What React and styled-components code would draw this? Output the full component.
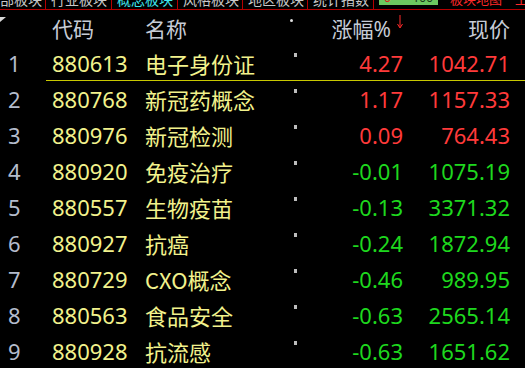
import styled, { createGlobalStyle } from "styled-components";

const GlobalStyle = createGlobalStyle`
  html, body {
    margin: 0;
    padding: 0;
    background: #000;
    overflow: hidden;
  }
  body {
    font-family: "Noto Sans", "Noto Sans CJK SC", sans-serif;
  }
`;

const Screen = styled.div`
  width: 525px;
  height: 368px;
  background: #000;
  overflow: hidden;
`;

const TabBar = styled.div`
  display: flex;
  height: 9px;
  border-bottom: 1px solid #b40000;
  overflow: hidden;
`;

const Tab = styled.div`
  width: ${(p) => p.$w}px;
  flex: none;
  height: 9px;
  overflow: hidden;
  border-right: ${(p) => (p.$sep ? "1px solid #b40000" : "none")};
  box-sizing: border-box;
  padding-left: ${(p) => p.$pl ?? 5}px;
  color: ${(p) => p.$color || "#c8c8c8"};
  font-size: ${(p) => p.$fs || 14}px;
  line-height: 14px;
  white-space: nowrap;
  font-family: "Noto Sans CJK SC", sans-serif;
`;

const TabText = styled.span`
  display: block;
  margin-top: -8px;
`;

const Meter = styled.div`
  width: 59px;
  flex: none;
  margin-left: 5px;
  height: 5px;
  background: #6cc860;
  display: flex;
  justify-content: space-between;
  padding: 0 5px;
  box-sizing: border-box;
  font-size: 12px;
  line-height: 12px;
  overflow: hidden;
`;

const MeterNum = styled.span`
  margin-top: -8px;
  color: ${(p) => p.$color};
`;

const Grid = styled.div`
  display: grid;
  grid-template-columns: 52px 93px 148px 6px 104px 107px 1fr;
`;

const HeaderRow = styled(Grid)`
  height: 36px;
  align-items: center;
  color: #c6ccd6;
  font-size: 21px;
  position: relative;
`;

const Corner = styled.svg`
  position: absolute;
  left: 0;
  top: 7px;
`;

const HeadCell = styled.div`
  display: flex;
  align-items: center;
  justify-content: ${(p) => (p.$right ? "flex-end" : "flex-start")};
`;

const HeadDot = styled.div`
  width: 3px;
  height: 3px;
  border-radius: 50%;
  background: #e0e0e0;
  align-self: start;
  margin-top: 9px;
  margin-left: -3px;
`;

const SortArrow = styled.svg`
  margin-left: 6px;
  margin-bottom: 12px;
`;

const Row = styled(Grid)`
  height: 36px;
  align-items: center;
  font-size: 22px;
  position: relative;
  margin-top: ${(p) => (p.$first ? "-1px" : "0")};

  &::after {
    content: "";
    display: ${(p) => (p.$selected ? "block" : "none")};
    position: absolute;
    left: 46px;
    right: 0;
    bottom: 0;
    height: 1px;
    background: #c8c800;
  }
`;

const Index = styled.div`
  padding-left: 8px;
  color: #b4bccc;
`;

const Code = styled.div`
  color: #f2f28c;
`;

const Name = styled.div`
  color: #f2f28c;
  font-family: "Noto Sans CJK SC", sans-serif;
`;

const Mark = styled.div`
  width: 3px;
  height: 4px;
  background: #bdbdbd;
  align-self: start;
  margin-top: 8px;
  margin-left: 1px;
`;

const Num = styled.div`
  text-align: right;
  color: ${(p) => (p.$up ? "#ff3a3a" : "#1ed81e")};
`;

const rows = [
  ["880613", "电子身份证", "4.27", "1042.71"],
  ["880768", "新冠药概念", "1.17", "1157.33"],
  ["880976", "新冠检测", "0.09", "764.43"],
  ["880920", "免疫治疗", "-0.01", "1075.19"],
  ["880557", "生物疫苗", "-0.13", "3371.32"],
  ["880927", "抗癌", "-0.24", "1872.94"],
  ["880729", "CXO概念", "-0.46", "989.95"],
  ["880563", "食品安全", "-0.63", "2565.14"],
  ["880928", "抗流感", "-0.63", "1651.62"],
];

export default function App() {
  return (
    <Screen>
      <GlobalStyle />
      <TabBar>
        <Tab $w={46} $sep $pl={0}>
          <TabText>部板块</TabText>
        </Tab>
        <Tab $w={66} $sep>
          <TabText>行业板块</TabText>
        </Tab>
        <Tab $w={66} $sep $color="#3ee6ee">
          <TabText>概念板块</TabText>
        </Tab>
        <Tab $w={65} $sep>
          <TabText>风格板块</TabText>
        </Tab>
        <Tab $w={65} $sep>
          <TabText>地区板块</TabText>
        </Tab>
        <Tab $w={66} $sep>
          <TabText>统计指数</TabText>
        </Tab>
        <Meter>
          <MeterNum $color="#e02020">0</MeterNum>
          <MeterNum $color="#1a3a1a">100</MeterNum>
        </Meter>
        <Tab $w={77} $pl={12} $fs={13} $color="#ff2a2a">
          <TabText>板块地图</TabText>
        </Tab>
        <Tab $w={10} $pl={0} $fs={13} $color="#ff2a2a">
          <TabText>上</TabText>
        </Tab>
      </TabBar>

      <HeaderRow>
        <Corner width="6" height="6" viewBox="0 0 6 6">
          <polygon points="0,0 6,0 0,5" fill="#d8d8d8" />
        </Corner>
        <div />
        <HeadCell>代码</HeadCell>
        <HeadCell>名称</HeadCell>
        <HeadDot />
        <HeadCell $right>
          涨幅%
          <SortArrow width="6" height="14" viewBox="0 0 6 14">
            <line x1="3" y1="0" x2="3" y2="12" stroke="#ff2a2a" strokeWidth="1" />
            <polyline points="0.5,9 3,13 5.5,9" fill="none" stroke="#ff2a2a" strokeWidth="1" />
          </SortArrow>
        </HeadCell>
        <HeadCell $right>现价</HeadCell>
        <div />
      </HeaderRow>

      {rows.map(([code, name, pct, price], i) => {
        const up = !pct.startsWith("-");
        return (
          <Row key={code} $selected={i === 0} $first={i === 0}>
            <Index>{i + 1}</Index>
            <Code>{code}</Code>
            <Name>{name}</Name>
            <Mark />
            <Num $up={up}>{pct}</Num>
            <Num $up={up}>{price}</Num>
            <div />
          </Row>
        );
      })}
    </Screen>
  );
}
